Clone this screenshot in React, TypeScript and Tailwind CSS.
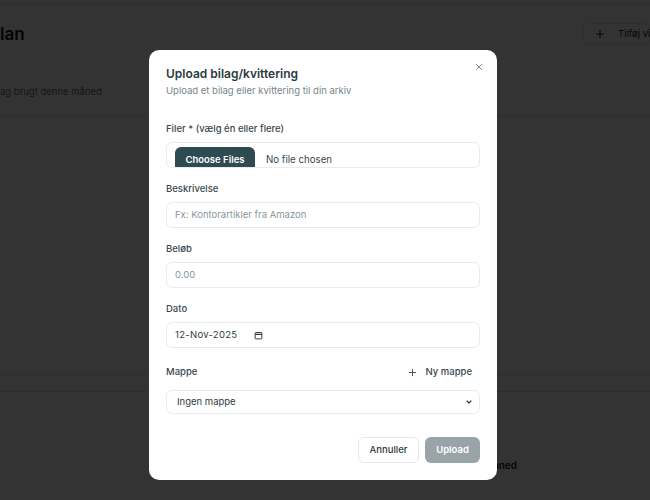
import React from "react";

function PlusIcon({ className }: { className?: string }) {
  return (
    <svg viewBox="0 0 24 24" fill="none" stroke="currentColor" strokeWidth={2} strokeLinecap="round" className={className}>
      <path d="M12 5v14M5 12h14" />
    </svg>
  );
}

function Field({ label, children }: { label: string; children: React.ReactNode }) {
  return (
    <div className="flex flex-col gap-[6px]">
      <label className="text-[9.5px] leading-[14px] font-medium text-[#3b474c]">{label}</label>
      {children}
    </div>
  );
}

export default function App() {
  return (
    <div className="relative w-[650px] h-[500px] overflow-hidden bg-white font-['Inter',sans-serif]">
      {/* page behind the dialog */}
      <div className="h-[5px] border-b border-gray-200" />
      <div className="flex items-center justify-between mt-[17px] h-[24px]">
        <h1 className="text-[17px] font-semibold text-gray-900 leading-none">lan</h1>
        <div className="w-[67px] h-[22px] flex items-center gap-3 pl-[10px] border border-gray-200 rounded-md whitespace-nowrap text-[9.5px] text-gray-900">
          <PlusIcon className="w-3 h-3 shrink-0" />
          <span>Tilføj vi</span>
        </div>
      </div>
      <div className="mt-[40px] text-[9.5px] text-gray-500 leading-[12px]">ag brugt denne måned</div>
      <div className="mt-[17px] border-b border-gray-200" />
      <div className="h-[259px] border-b border-gray-200" />
      <div className="h-[17px] border-b border-gray-200" />
      <div className="flex">
        <div className="ml-[484px] mt-[67px] flex flex-col">
          <span className="text-[10px] font-semibold text-gray-900 leading-[12px]">måned</span>
          <span className="text-[8px] text-gray-500 leading-[10px]">—</span>
        </div>
      </div>

      {/* overlay + dialog */}
      <div className="fixed inset-0 bg-black/80 flex items-start pl-[149px] pt-[50px]">
        <div className="relative w-[348px] h-[430px] bg-white rounded-[10px] px-[17px] pt-[15px] flex flex-col">
          <button className="absolute right-[13px] top-[12px] text-[#6b7478]">
            <svg viewBox="0 0 24 24" fill="none" stroke="currentColor" strokeWidth={2} strokeLinecap="round" className="w-[10px] h-[10px]">
              <path d="M18 6 6 18M6 6l12 12" />
            </svg>
          </button>
          <h2 className="text-[12px] leading-[18px] font-semibold text-[#2a3a40]">Upload bilag/kvittering</h2>
          <p className="mt-[1px] text-[9.5px] leading-[14px] text-[#75858a]">Upload et bilag eller kvittering til din arkiv</p>

          <div className="mt-[24px] flex flex-col gap-[14px]">
            <Field label="Filer * (vælg én eller flere)">
              <div className="h-[26px] border border-[#e8ecee] rounded-md overflow-hidden flex items-start pl-[8px] pt-[4px] gap-[11px]">
                <span className="h-[27px] w-[80px] justify-center rounded-md bg-[#2d4b51] text-white text-[9.5px] font-semibold flex items-center">Choose Files</span>
                <span className="h-[27px] flex items-center text-[9.7px] text-[#3b474c]">No file chosen</span>
              </div>
            </Field>
            <Field label="Beskrivelse">
              <div className="h-[26px] border border-[#e8ecee] rounded-md flex items-center px-[8px] text-[9.5px] text-[#8a969a]">Fx: Kontorartikler fra Amazon</div>
            </Field>
            <Field label="Beløb">
              <div className="h-[26px] border border-[#e8ecee] rounded-md flex items-center px-[8px] text-[9.5px] text-[#8a969a]">0.00</div>
            </Field>
            <Field label="Dato">
              <div className="h-[26px] border border-[#e8ecee] rounded-md flex items-center px-[8px] text-[9.5px] text-[#2f3b40] gap-[17px]">
                <span className="tracking-[0.3px]">12-Nov-2025</span>
                <svg viewBox="0 0 12 12" className="w-[9px] h-[9px]" fill="none" stroke="#2f3b40">
                  <rect x="1.5" y="2" width="9" height="8.5" rx="1" strokeWidth="1.3" />
                  <path d="M1.5 4.5h9" strokeWidth="1.6" />
                </svg>
              </div>
            </Field>
          </div>

          <div className="mt-[12px] h-[24px] flex items-center justify-between">
            <span className="text-[9.5px] font-medium text-[#3b474c]">Mappe</span>
            <button className="flex items-center gap-[8px] pr-[8px] text-[9.5px] font-medium text-[#3b474c]">
              <PlusIcon className="w-[11px] h-[11px]" />
              Ny mappe
            </button>
          </div>
          <div className="mt-[6px] h-[24px] border border-[#e8ecee] rounded-md flex items-center justify-between pl-[10px] pr-[6px] text-[9.5px] text-[#2f3b40]">
            <span>Ingen mappe</span>
            <svg viewBox="0 0 24 24" fill="none" stroke="currentColor" strokeWidth={3.5} strokeLinecap="round" strokeLinejoin="round" className="w-[8px] h-[8px]">
              <path d="m6 9 6 6 6-6" />
            </svg>
          </div>

          <div className="mt-[23px] flex justify-end gap-[6px]">
            <button className="h-[26px] w-[61px] border border-[#e5e8ea] rounded-md text-[9.5px] font-medium text-[#2f3b40]">Annuller</button>
            <button className="h-[26px] w-[55px] rounded-md bg-[#98a4a8] text-[9.5px] font-semibold text-white">Upload</button>
          </div>
        </div>
      </div>
    </div>
  );
}
